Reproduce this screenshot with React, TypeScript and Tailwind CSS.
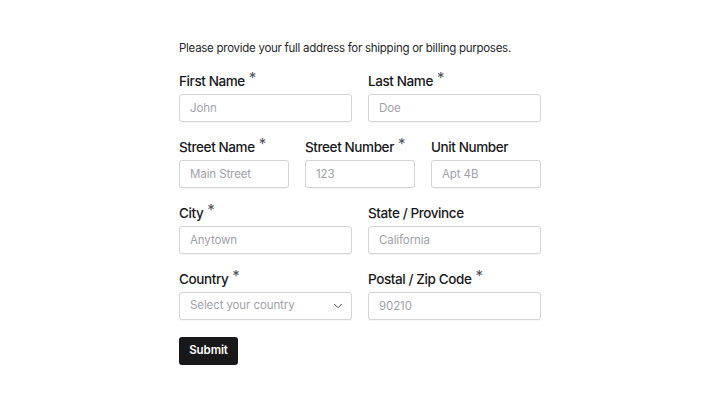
import { ChevronDown } from 'lucide-react';

type FieldProps = {
  label: string;
  placeholder: string;
  required?: boolean;
};

function Label({ label, required }: { label: string; required?: boolean }) {
  return (
    <label className="flex h-5 items-start gap-[4px] text-[13.5px] leading-5 font-medium tracking-[-0.4px] text-[#18181b]">
      <span>{label}</span>
      {required && (
        <span className="text-[15px] leading-[14px] font-normal text-[#52525b]">*</span>
      )}
    </label>
  );
}

function Field({ label, placeholder, required }: FieldProps) {
  return (
    <div className="flex flex-col gap-[3px]">
      <Label label={label} required={required} />
      <input
        placeholder={placeholder}
        className="h-[28px] w-full rounded-[3px] border border-[#d4d4d8] bg-white px-[10px] text-[11.5px] tracking-[-0.1px] text-[#18181b] shadow-[0_1px_1px_rgba(0,0,0,0.04)] outline-none placeholder:text-[#a1a1aa]"
      />
    </div>
  );
}

export default function App() {
  return (
    <div
      className="min-h-[405px] w-full bg-white"
      style={{ fontFamily: 'Inter, "Noto Sans", sans-serif' }}
    >
      <div className="mx-auto w-[362px] pt-[38px]">
        <p className="mb-[13px] text-[11.5px] leading-5 tracking-[-0.27px] text-[#27272a]">
          Please provide your full address for shipping or billing purposes.
        </p>
        <form className="flex flex-col gap-[15px]" onSubmit={(e) => e.preventDefault()}>
          <div className="grid grid-cols-2 gap-x-4">
            <Field label="First Name" placeholder="John" required />
            <Field label="Last Name" placeholder="Doe" required />
          </div>
          <div className="grid grid-cols-3 gap-x-4">
            <Field label="Street Name" placeholder="Main Street" required />
            <Field label="Street Number" placeholder="123" required />
            <Field label="Unit Number" placeholder="Apt 4B" />
          </div>
          <div className="grid grid-cols-2 gap-x-4">
            <Field label="City" placeholder="Anytown" required />
            <Field label="State / Province" placeholder="California" />
          </div>
          <div className="grid grid-cols-2 gap-x-4">
            <div className="flex flex-col gap-[3px]">
              <Label label="Country" required />
              <button
                type="button"
                className="flex h-[28px] w-full items-center justify-between rounded-[3px] border border-[#d4d4d8] bg-white pr-[6px] pl-[10px] text-[11.5px] tracking-[-0.1px] text-[#a1a1aa] shadow-[0_1px_1px_rgba(0,0,0,0.04)]"
              >
                <span>Select your country</span>
                <ChevronDown className="h-[14px] w-[14px] text-[#3f3f46]" strokeWidth={1.6} />
              </button>
            </div>
            <Field label="Postal / Zip Code" placeholder="90210" required />
          </div>
          <div className="pt-[1px]">
            <button
              type="submit"
              className="h-[28px] w-[59px] rounded-[3px] bg-[#18181b] text-[11.5px] font-semibold tracking-[-0.1px] text-white"
            >
              Submit
            </button>
          </div>
        </form>
      </div>
    </div>
  );
}
